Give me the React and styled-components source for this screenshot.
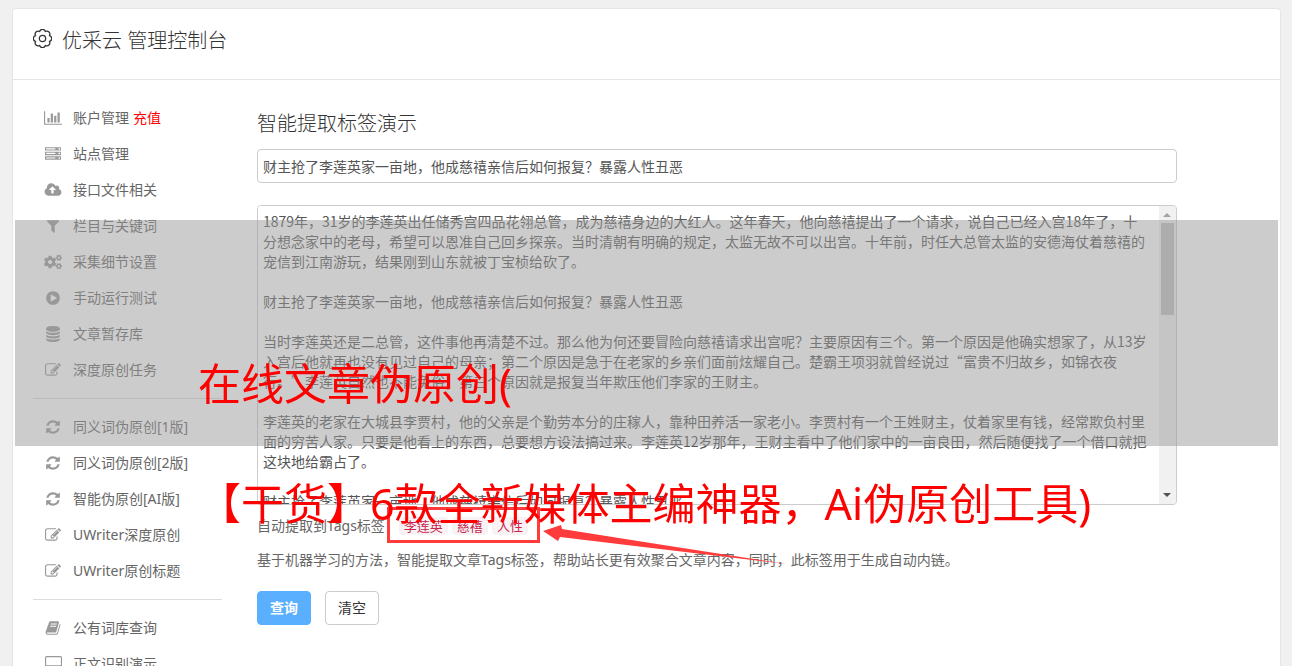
import React from "react";
import styled, { createGlobalStyle } from "styled-components";
import { FaCogs } from "react-icons/fa";

const sans = `"Noto Sans", "Noto Sans CJK SC", sans-serif`;

const GlobalStyle = createGlobalStyle`
  * { box-sizing: border-box; }
  html { overflow: hidden; background: #f0f0f0; }
  body {
    margin: 0;
    font-family: ${sans};
    font-size: 14px;
    line-height: 20px;
    color: #555;
    text-spacing-trim: space-all;
  }
`;

const Page = styled.div`
  position: relative;
  min-height: 100vh;
  padding: 8px 11px 0 12px;
`;

const Card = styled.div`
  background: #fff;
  border: 1px solid #e5e5e5;
  border-bottom: 0;
  border-radius: 4px 4px 0 0;
`;

const Header = styled.header`
  display: flex;
  align-items: flex-start;
  gap: 10px;
  height: 71px;
  padding: 16px 20px 0;
  border-bottom: 1px solid #e5e5e5;
  color: #333;
`;

const GearBox = styled.span`
  display: flex;
  padding-top: 4px;
`;

const Brand = styled.h1`
  margin: 0;
  font-size: 20px;
  line-height: 32px;
  font-weight: 300;
`;

const Body = styled.div`
  display: flex;
  gap: 35px;
  padding: 20px 20px 0;
`;

const Sidebar = styled.nav`
  flex: 0 0 189px;
`;

const Group = styled.ul`
  list-style: none;
  margin: 0;
  padding: 0;
  & + & {
    margin-top: 10px;
    padding-top: 10px;
    border-top: 1px solid #ddd;
  }
`;

const NavLink = styled.a`
  display: flex;
  align-items: center;
  height: 36px;
  color: #666;
  text-decoration: none;
`;

const IconBox = styled.span`
  display: flex;
  justify-content: center;
  width: 40px;
  color: #999;
`;

const Recharge = styled.span`
  margin-left: 4px;
  color: #f00;
`;

const Main = styled.main`
  flex: 1 1 0;
  max-width: 920px;
`;

const Title = styled.h2`
  margin: 8px 0 9px;
  font-size: 20px;
  line-height: 32px;
  font-weight: 300;
  color: #333;
`;

const TextInput = styled.input`
  display: block;
  width: 100%;
  height: 34px;
  padding: 5px;
  border: 1px solid #ccc;
  border-radius: 4px;
  font: inherit;
  color: #555;
  outline: 0;
`;

const ArticleBox = styled.div`
  display: flex;
  height: 300px;
  margin: 22px 0 11px;
  border: 1px solid #ccc;
  border-radius: 4px;
  overflow: hidden;
`;

const Article = styled.textarea`
  flex: 1;
  padding: 5px 10px 5px 5px;
  border: 0;
  outline: 0;
  resize: none;
  overflow-y: auto;
  scrollbar-width: none;
  font-family: "Noto Sans CJK SC", sans-serif;
  font-size: 14px;
  line-height: 20px;
  color: #555;
  text-spacing-trim: space-all;
`;

const Track = styled.div`
  display: flex;
  flex-direction: column;
  width: 17px;
  padding: 0 2px;
  background: #f1f1f1;
`;

const Thumb = styled.div`
  height: 92px;
  margin-bottom: auto;
  background: #c1c1c1;
`;

const Arrow = styled.svg`
  display: block;
  width: 13px;
  height: 17px;
  fill: ${(p) => p.$color};
`;

const TagLine = styled.div`
  display: flex;
  align-items: center;
  height: 20px;
  color: #666;
`;

const Tags = styled.span`
  display: flex;
  gap: 4px;
`;

const Tag = styled.code`
  height: 18px;
  padding: 0 5px;
  border-radius: 4px;
  background: #f9f2f4;
  color: #c7254e;
  font-family: ${sans};
  font-size: 13px;
  line-height: 18px;
`;

const Note = styled.p`
  margin: 14px 0 21px;
  color: #666;
`;

const Actions = styled.div`
  display: flex;
  gap: 14px;
`;

const Button = styled.button`
  width: 54px;
  height: 34px;
  padding: 0;
  border: 1px solid ${(p) => (p.$primary ? "#5ab0ff" : "#ccc")};
  border-radius: 4px;
  background: ${(p) => (p.$primary ? "#5ab0ff" : "#fff")};
  color: ${(p) => (p.$primary ? "#fff" : "#333")};
  font: inherit;
  font-weight: ${(p) => (p.$primary ? 700 : 400)};
`;

const Band = styled.div`
  position: absolute;
  top: 220px;
  left: 15px;
  right: 14px;
  height: 226px;
  background: rgba(153, 153, 153, 0.5);
  pointer-events: none;
`;

const Caption = styled.div`
  position: absolute;
  top: 324px;
  left: 198px;
  font-size: 43px;
  line-height: 120px;
  color: #f00;
  white-space: nowrap;
  pointer-events: none;
`;

const Marks = styled.svg`
  position: absolute;
  top: 500px;
  left: 380px;
  width: 420px;
  height: 80px;
  pointer-events: none;
`;

const fa = {
  chart: [2048, "M640 896v512h-256v-512h256zm384-512v1024h-256v-1024h256zm1024 1152v128h-2048v-1536h128v1408h1920zm-640-896v768h-256v-768h256zm384-384v1152h-256v-1152h256z"],
  server: [1792, "M128 1408h1024v-128h-1024v128zm0-512h1024v-128h-1024v128zm1568 448q0-40-28-68t-68-28-68 28-28 68 28 68 68 28 68-28 28-68zm-1568-960h1024v-128h-1024v128zm1568 448q0-40-28-68t-68-28-68 28-28 68 28 68 68 28 68-28 28-68zm0-512q0-40-28-68t-68-28-68 28-28 68 28 68 68 28 68-28 28-68zm96 832v384h-1792v-384h1792zm0-512v384h-1792v-384h1792zm0-512v384h-1792v-384h1792z"],
  upload: [2048, "M1344 864q0-14-9-23l-352-352q-9-9-23-9t-23 9l-351 351q-10 12-10 24 0 14 9 23t23 9h224v352q0 13 9.5 22.5t22.5 9.5h192q13 0 22.5-9.5t9.5-22.5v-352h224q13 0 22.5-9.5t9.5-22.5zm640 288q0 159-112.5 271.5t-271.5 112.5h-1088q-185 0-316.5-131.5t-131.5-316.5q0-130 70-240t188-165q-2-30-2-43 0-212 150-362t362-150q156 0 285.5 87t188.5 231q71-62 166-62 106 0 181 75t75 181q0 76-41 138 130 31 213.5 135.5t83.5 238.5z"],
  filter: [1792, "M1595 295q17 41-14 70l-493 493v742q0 42-39 59-13 5-25 5-27 0-45-19l-256-256q-19-19-19-45v-486l-493-493q-31-29-14-70 17-39 59-39h1280q42 0 59 39z"],
  play: [1792, "M896 128q209 0 385.5 103t279.5 279.5 103 385.5-103 385.5-279.5 279.5-385.5 103-385.5-103-279.5-279.5-103-385.5 103-385.5 279.5-279.5 385.5-103zm384 823q32-18 32-55t-32-55l-544-320q-31-19-64-1-32 19-32 56v640q0 37 32 56 16 8 32 8 17 0 32-9z"],
  database: [1792, "M896 768q237 0 443-43t325-127v170q0 69-103 128t-280 93.5-385 34.5-385-34.5-280-93.5-103-128v-170q119 84 325 127t443 43zm0 768q237 0 443-43t325-127v170q0 69-103 128t-280 93.5-385 34.5-385-34.5-280-93.5-103-128v-170q119 84 325 127t443 43zm0-384q237 0 443-43t325-127v170q0 69-103 128t-280 93.5-385 34.5-385-34.5-280-93.5-103-128v-170q119 84 325 127t443 43zm0-1152q208 0 385 34.5t280 93.5 103 128v128q0 69-103 128t-280 93.5-385 34.5-385-34.5-280-93.5-103-128v-128q0-69 103-128t280-93.5 385-34.5z"],
  edit: [1792, "M888 1184l116-116-152-152-116 116v56h96v96h56zm440-720q-16-16-33 1l-350 350q-17 17-1 33t33-1l350-350q17-17 1-33zm80 594v190q0 119-84.5 203.5t-203.5 84.5h-832q-119 0-203.5-84.5t-84.5-203.5v-832q0-119 84.5-203.5t203.5-84.5h832q63 0 117 25 15 7 18 23 3 17-9 29l-49 49q-14 14-32 8-23-6-45-6h-832q-66 0-113 47t-47 113v832q0 66 47 113t113 47h832q66 0 113-47t47-113v-126q0-13 9-22l64-64q15-15 35-7t20 29zm-96-738l288 288-672 672h-288v-288zm444 132l-92 92-288-288 92-92q28-28 68-28t68 28l152 152q28 28 28 68t-28 68z"],
  refresh: [1792, "M1639 1056q0 5-1 7-64 268-268 434.5t-478 166.5q-146 0-282.5-55t-243.5-157l-129 129q-19 19-45 19t-45-19-19-45v-448q0-26 19-45t45-19h448q26 0 45 19t19 45-19 45l-137 137q71 66 161 102t187 36q134 0 250-65t186-179q11-17 53-117 8-23 30-23h192q13 0 22.5 9.5t9.5 22.5zm25-800v448q0 26-19 45t-45 19h-448q-26 0-45-19t-19-45 19-45l138-138q-148-137-349-137-134 0-250 65t-186 179q-11 17-53 117-8 23-30 23h-199q-13 0-22.5-9.5t-9.5-22.5v-7q65-268 270-434.5t480-166.5q146 0 284 55.5t245 156.5l130-129q19-19 45-19t45 19 19 45z"],
  book: [1792, "M1703 478q40 57 18 129l-275 906q-19 64-76.5 107.5t-122.5 43.5h-923q-77 0-148.5-53.5t-99.5-131.5q-24-67-2-127 0-4 3-27t4-37q1-8-3-21.5t-3-19.5q2-11 8-21t16.5-23.5 16.5-23.5q23-38 45-91.5t30-91.5q3-10 .5-30t-.5-28q3-11 17-28t17-23q21-36 42-92t25-90q1-9-2.5-32t.5-28q4-13 22-30.5t22-22.5q19-26 42.5-84.5t27.5-96.5q1-8-3-25.5t-2-26.5q2-8 9-18t18-23 17-21q8-12 16.5-30.5t15-35 16-36 19.5-32 26.5-23.5 36-11.5 47.5 5.5l-1 3q38-9 51-9h761q74 0 114 56t18 130l-274 906q-36 119-71.5 153.5t-128.5 34.5h-869q-27 0-38 15-11 16-1 43 24 70 144 70h923q29 0 56-15.5t35-41.5l300-987q7-22 5-57 38 15 59 43zm-1064 2q-4 13 2 22.5t20 9.5h608q13 0 25.5-9.5t16.5-22.5l21-64q4-13-2-22.5t-20-9.5h-608q-13 0-25.5 9.5t-16.5 22.5zm-83 256q-4 13 2 22.5t20 9.5h608q13 0 25.5-9.5t16.5-22.5l21-64q4-13-2-22.5t-20-9.5h-608q-13 0-25.5 9.5t-16.5 22.5z"],
  desktop: [1920, "M1792 992v-832q0-13-9.500-22.500t-22.500-9.500h-1600q-13 0-22.500 9.500t-9.500 22.500v832q0 13 9.500 22.500t22.500 9.500h1600q13 0 22.500-9.500t9.500-22.500zm128-832v1088q0 66-47 113t-113 47h-544q0 37 16 77.500t32 71 16 43.500q0 26-19 45t-45 19h-512q-26 0-45-19t-19-45q0-14 16-44t32-70 16-78h-544q-66 0-113-47t-47-113v-1088q0-66 47-113t113-47h1600q66 0 113 47t47 113z"],
};

function Icon({ name }) {
  if (name === "cogs") return <FaCogs size={18} />;
  const [w, d] = fa[name];
  return (
    <svg viewBox={`0 0 ${w} 1792`} width={Math.round(w / 112)} height="16" fill="currentColor" aria-hidden="true">
      <path d={d} />
    </svg>
  );
}

function scallop() {
  const n = 8;
  let d = "";
  for (let i = 0; i <= n; i++) {
    const a = ((i + 0.5) / n) * Math.PI * 2;
    const x = (9 + 7.1 * Math.cos(a)).toFixed(2);
    const y = (9 + 7.1 * Math.sin(a)).toFixed(2);
    d += i === 0 ? `M${x} ${y}` : `A2.800 2.800 0 0 1 ${x} ${y}`;
  }
  return d + "Z";
}

const groups = [
  [
    ["chart", "账户管理"],
    ["server", "站点管理"],
    ["upload", "接口文件相关"],
    ["filter", "栏目与关键词"],
    ["cogs", "采集细节设置"],
    ["play", "手动运行测试"],
    ["database", "文章暂存库"],
    ["edit", "深度原创任务"],
  ],
  [
    ["refresh", "同义词伪原创[1版]"],
    ["refresh", "同义词伪原创[2版]"],
    ["refresh", "智能伪原创[AI版]"],
    ["edit", "UWriter深度原创"],
    ["edit", "UWriter原创标题"],
  ],
  [
    ["book", "公有词库查询"],
    ["desktop", "正文识别演示"],
  ],
];

const headline = "财主抢了李莲英家一亩地，他成慈禧亲信后如何报复？暴露人性丑恶";

const article = [
  "1879年，31岁的李莲英出任储秀宫四品花翎总管，成为慈禧身边的大红人。这年春天，他向慈禧提出了一个请求，说自己已经入宫18年了，十分想念家中的老母，希望可以恩准自己回乡探亲。当时清朝有明确的规定，太监无故不可以出宫。十年前，时任大总管太监的安德海仗着慈禧的宠信到江南游玩，结果刚到山东就被丁宝桢给砍了。",
  headline,
  "当时李莲英还是二总管，这件事他再清楚不过。那么他为何还要冒险向慈禧请求出宫呢？主要原因有三个。第一个原因是他确实想家了，从13岁入宫后他就再也没有见过自己的母亲；第二个原因是急于在老家的乡亲们面前炫耀自己。楚霸王项羽就曾经说过“富贵不归故乡，如锦衣夜行。”李莲英自然也不能免俗；第三个原因就是报复当年欺压他们李家的王财主。",
  "李莲英的老家在大城县李贾村，他的父亲是个勤劳本分的庄稼人，靠种田养活一家老小。李贾村有一个王姓财主，仗着家里有钱，经常欺负村里面的穷苦人家。只要是他看上的东西，总要想方设法搞过来。李莲英12岁那年，王财主看中了他们家中的一亩良田，然后随便找了一个借口就把这块地给霸占了。",
  headline,
].join("\n\n");

export default function App() {
  return (
    <Page>
      <GlobalStyle />
      <Card>
        <Header>
          <GearBox>
            <svg width="19" height="19" viewBox="0 0 18 18" fill="none" stroke="currentColor" strokeWidth="1.2" strokeLinejoin="round" aria-hidden="true">
              <path d={scallop()} />
              <circle cx="9" cy="9" r="3" />
            </svg>
          </GearBox>
          <Brand>优采云 管理控制台</Brand>
        </Header>
        <Body>
          <Sidebar>
            {groups.map((items, g) => (
              <Group key={g}>
                {items.map(([icon, label], i) => (
                  <li key={label}>
                    <NavLink href="#">
                      <IconBox>
                        <Icon name={icon} />
                      </IconBox>
                      {label}
                      {g === 0 && i === 0 && <Recharge>充值</Recharge>}
                    </NavLink>
                  </li>
                ))}
              </Group>
            ))}
          </Sidebar>
          <Main>
            <Title>智能提取标签演示</Title>
            <TextInput aria-label="标题" defaultValue={headline} />
            <ArticleBox>
              <Article aria-label="正文" spellCheck={false} defaultValue={article} />
              <Track aria-hidden="true">
                <Arrow $color="#a3a3a3" viewBox="0 0 13 17">
                  <path d="M2 11L6 7L10 11Z" />
                </Arrow>
                <Thumb />
                <Arrow $color="#505050" viewBox="0 0 13 17">
                  <path d="M2 6L6 10L10 6Z" />
                </Arrow>
              </Track>
            </ArticleBox>
            <TagLine>
              <span>自动提取到Tags标签：</span>
              <Tags>
                <Tag>李莲英</Tag>
                <Tag>慈禧</Tag>
                <Tag>人性</Tag>
              </Tags>
            </TagLine>
            <Note>基于机器学习的方法，智能提取文章Tags标签，帮助站长更有效聚合文章内容，同时，此标签用于生成自动内链。</Note>
            <Actions>
              <Button type="button" $primary>查询</Button>
              <Button type="button">清空</Button>
            </Actions>
          </Main>
        </Body>
      </Card>
      <Marks viewBox="380 500 420 80" aria-hidden="true">
        <rect x="388.500" y="508.500" width="150" height="33" fill="none" stroke="#ff3b3b" strokeWidth="3" />
        <path d="M543 531L561 525L562 529L660 544.500L786 564L660 549L560 537L558 541Z" fill="#ff3b3b" />
      </Marks>
      <Band />
      <Caption>
        <div>在线文章伪原创(</div>
        <div>【干货】6款全新媒体主编神器，Ai伪原创工具)</div>
      </Caption>
    </Page>
  );
}
